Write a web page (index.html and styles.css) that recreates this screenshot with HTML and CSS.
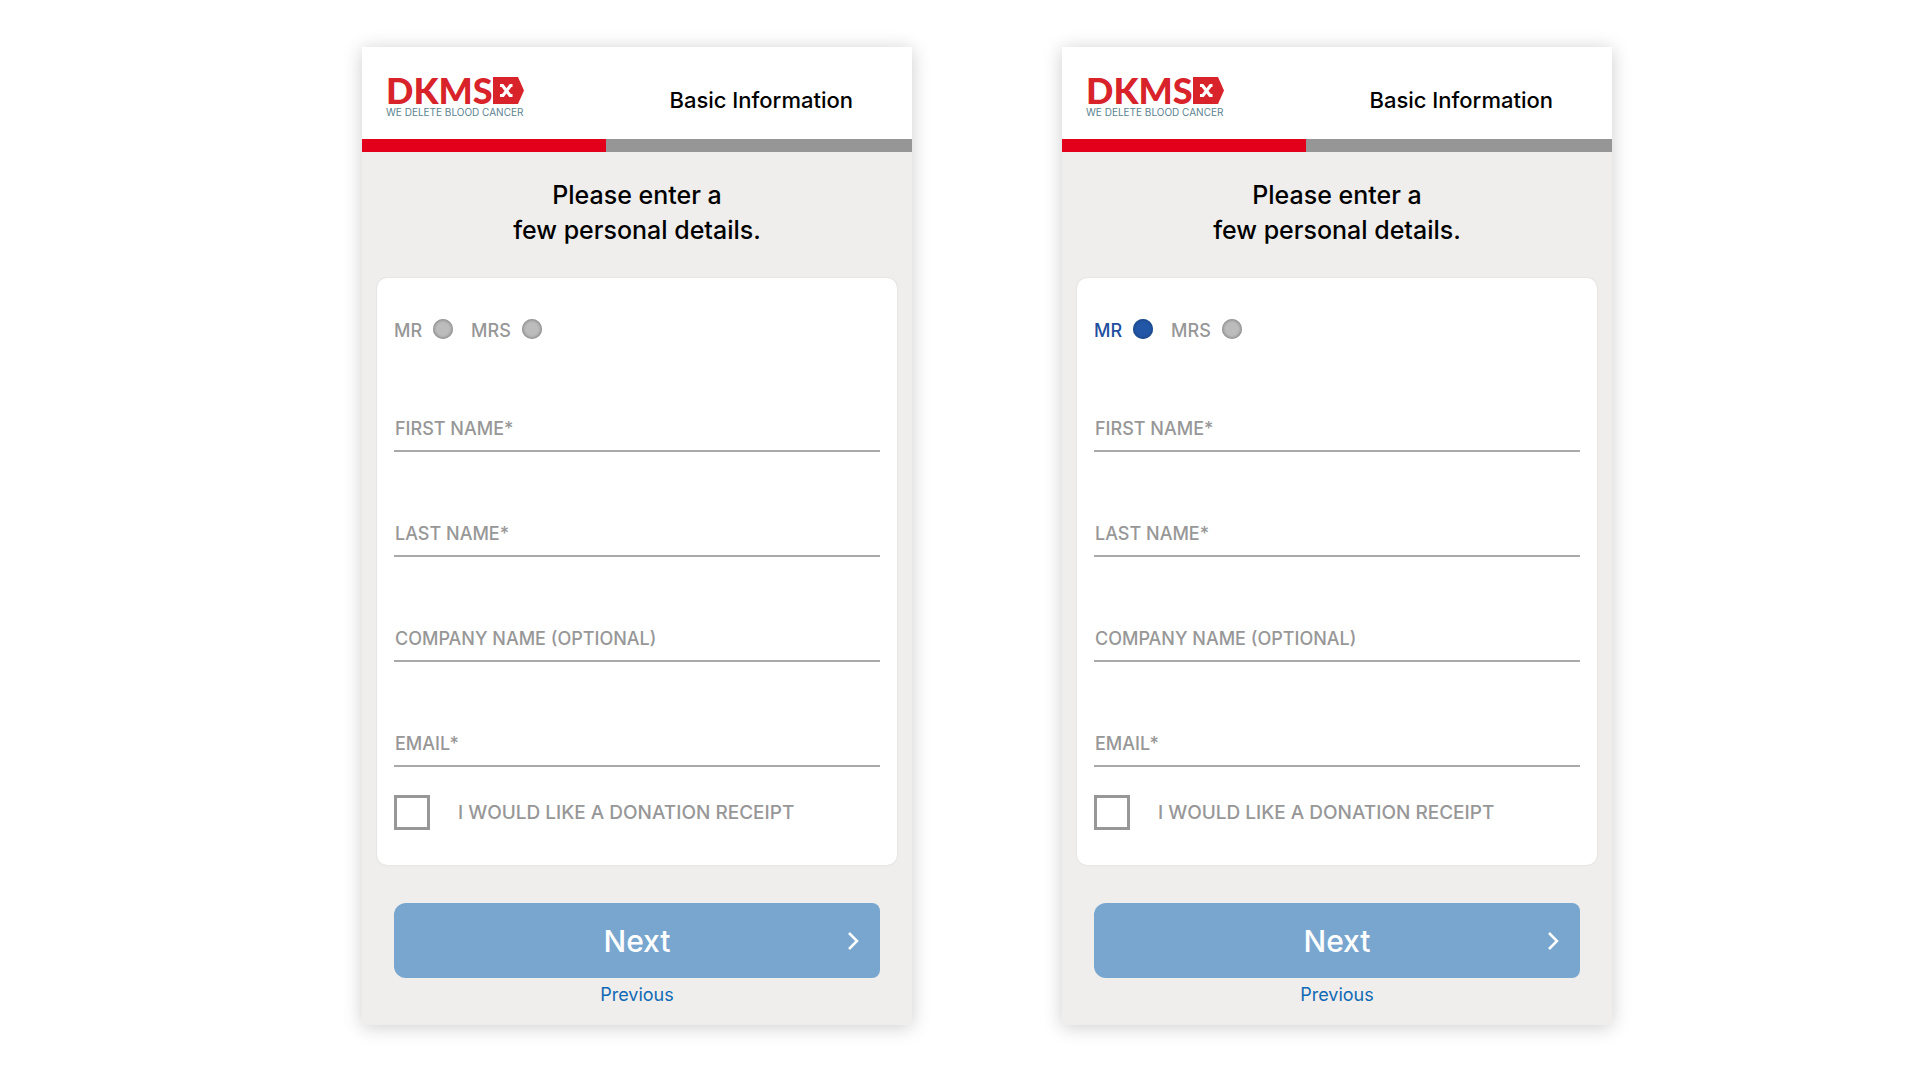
FILE: index.html
```html
<!DOCTYPE html>
<html lang="en">
<head>
  <meta charset="UTF-8">
  <meta name="viewport" content="width=device-width, initial-scale=1.0">
  <title>DKMS - Basic Information</title>
  <link rel="stylesheet" href="styles.css">
</head>
<body>
  <main class="screens">
    <!-- Nothing selected -->
    <form class="screen">
      <header class="header">
        <div class="logo">
          <div class="logo-main">
            <span class="logo-name">DKMS</span>
            <svg class="logo-mark" width="31" height="27" viewBox="0 0 31 27" aria-hidden="true">
              <path d="M0 0H25L31 13.500L25 27H0Z" fill="#d8232a"/>
              <path d="M7 8.500H9.500L17 18.500H19.500M19.500 8.500H17.500L10 18.500H7" fill="none" stroke="#fff" stroke-width="3.200"/>
            </svg>
          </div>
          <div class="logo-claim">WE DELETE BLOOD CANCER</div>
        </div>
        <div class="step-name">Basic Information</div>
      </header>
      <div class="progress"><div class="progress-done"></div></div>

      <h1 class="title">Please enter a<br>few personal details.</h1>

      <div class="card">
        <div class="salutation">
          <label class="option"><span>MR</span><input type="radio" name="salutation" value="mr"></label>
          <label class="option"><span>MRS</span><input type="radio" name="salutation" value="mrs"></label>
        </div>
        <div class="field">
          <label for="first-a">FIRST NAME*</label>
          <input type="text" id="first-a">
        </div>
        <div class="field">
          <label for="last-a">LAST NAME*</label>
          <input type="text" id="last-a">
        </div>
        <div class="field">
          <label for="company-a">COMPANY NAME (OPTIONAL)</label>
          <input type="text" id="company-a">
        </div>
        <div class="field">
          <label for="email-a">EMAIL*</label>
          <input type="email" id="email-a">
        </div>
        <label class="receipt"><input type="checkbox"><span>I WOULD LIKE A DONATION RECEIPT</span></label>
      </div>

      <div class="actions">
        <button type="button" class="btn-next">
          <span>Next</span>
          <svg class="chevron" width="13" height="20" viewBox="0 0 13 20" aria-hidden="true">
            <path d="M2 2L10 10L2 18" fill="none" stroke="#fff" stroke-width="2.500"/>
          </svg>
        </button>
        <a href="#" class="previous">Previous</a>
      </div>
    </form>

    <!-- Mr selected -->
    <form class="screen">
      <header class="header">
        <div class="logo">
          <div class="logo-main">
            <span class="logo-name">DKMS</span>
            <svg class="logo-mark" width="31" height="27" viewBox="0 0 31 27" aria-hidden="true">
              <path d="M0 0H25L31 13.500L25 27H0Z" fill="#d8232a"/>
              <path d="M7 8.500H9.500L17 18.500H19.500M19.500 8.500H17.500L10 18.500H7" fill="none" stroke="#fff" stroke-width="3.200"/>
            </svg>
          </div>
          <div class="logo-claim">WE DELETE BLOOD CANCER</div>
        </div>
        <div class="step-name">Basic Information</div>
      </header>
      <div class="progress"><div class="progress-done"></div></div>

      <h1 class="title">Please enter a<br>few personal details.</h1>

      <div class="card">
        <div class="salutation">
          <label class="option selected"><span>MR</span><input type="radio" name="salutation" value="mr" checked></label>
          <label class="option"><span>MRS</span><input type="radio" name="salutation" value="mrs"></label>
        </div>
        <div class="field">
          <label for="first-b">FIRST NAME*</label>
          <input type="text" id="first-b">
        </div>
        <div class="field">
          <label for="last-b">LAST NAME*</label>
          <input type="text" id="last-b">
        </div>
        <div class="field">
          <label for="company-b">COMPANY NAME (OPTIONAL)</label>
          <input type="text" id="company-b">
        </div>
        <div class="field">
          <label for="email-b">EMAIL*</label>
          <input type="email" id="email-b">
        </div>
        <label class="receipt"><input type="checkbox"><span>I WOULD LIKE A DONATION RECEIPT</span></label>
      </div>

      <div class="actions">
        <button type="button" class="btn-next">
          <span>Next</span>
          <svg class="chevron" width="13" height="20" viewBox="0 0 13 20" aria-hidden="true">
            <path d="M2 2L10 10L2 18" fill="none" stroke="#fff" stroke-width="2.500"/>
          </svg>
        </button>
        <a href="#" class="previous">Previous</a>
      </div>
    </form>
  </main>
</body>
</html>
```
FILE: styles.css
```css
* {
  box-sizing: border-box;
}

body {
  margin: 0;
  background: #fff;
  color: #000;
  font-family: Inter, "Open Sans", sans-serif;
}

.screens {
  display: flex;
  justify-content: center;
  gap: 150px;
  padding: 47px 0 47px 54px;
}

.screen {
  flex: 1;
  max-width: 550px;
  background: #efeeec;
  box-shadow: 0 2px 18px rgba(0, 0, 0, 0.2);
}

.header {
  display: flex;
  justify-content: space-between;
  height: 92px;
  padding: 30px 59px 0 24px;
  background: #fff;
}

.logo {
  width: 137px;
}

.logo-main {
  display: flex;
  justify-content: space-between;
  height: 27px;
}

.logo-name {
  color: #d8232a;
  font-family: Lato, sans-serif;
  font-size: 36px;
  font-weight: 900;
  line-height: 27px;
}

.logo-mark {
  flex-shrink: 0;
}

.logo-claim {
  color: #5b8391;
  font-size: 10px;
  line-height: 17px;
  white-space: nowrap;
}

.step-name {
  font-size: 22px;
  font-weight: 500;
  line-height: 46px;
}

.progress {
  height: 13px;
  background: #969696;
}

.progress-done {
  width: calc(100% * 4 / 9);
  height: 100%;
  background: #e2001a;
}

.title {
  margin: 26px 0 30px;
  font-size: 25px;
  font-weight: 500;
  line-height: 35px;
  text-align: center;
}

.card {
  margin: 0 15px;
  padding: 41px 17px 35px;
  border-radius: 10px;
  background: #fff;
  box-shadow: 0 0 2px rgba(0, 0, 0, 0.12);
  color: #979797;
  font-size: 18px;
  font-weight: 500;
}

.salutation {
  display: flex;
  gap: 18px;
  margin-bottom: 8px;
}

.option {
  display: flex;
  align-items: flex-end;
  gap: 11px;
  line-height: 16px;
}

.option.selected {
  color: #1f4f9e;
}

.option input {
  appearance: none;
  width: 20px;
  height: 20px;
  margin: 0;
  border-radius: 50%;
  background: #bcbcbc;
  box-shadow: inset 0 0 3px 1px #858585;
}

.option input:checked {
  background: #2257a8;
  box-shadow: inset 0 0 3px 1px #1b4583;
}

.field {
  display: flex;
  align-items: flex-end;
  height: 105px;
  padding: 0 1px 9px;
  border-bottom: 2px solid #a9a9a9;
  line-height: 24px;
}

.field input {
  flex: 1;
  min-width: 0;
  height: 24px;
  padding: 0 8px;
  border: 0;
  outline: 0;
  background: none;
  font: inherit;
}

.receipt {
  display: flex;
  align-items: center;
  gap: 28px;
  margin-top: 28px;
  font-size: 19px;
  line-height: 24px;
}

.receipt input {
  appearance: none;
  width: 36px;
  height: 35px;
  margin: 0;
  border: 3px solid #979797;
}

.actions {
  padding: 38px 32px 13px;
  text-align: center;
}

.btn-next {
  display: flex;
  align-items: center;
  justify-content: center;
  position: relative;
  width: 100%;
  height: 75px;
  border: 0;
  border-radius: 12px 8px 8px 12px;
  background: #78a6cf;
  color: #fff;
  font: 500 30px Inter, "Open Sans", sans-serif;
}

.chevron {
  position: absolute;
  right: 20px;
}

.previous {
  display: block;
  color: #0f69b4;
  font-size: 18px;
  line-height: 34px;
  text-decoration: none;
}
```
